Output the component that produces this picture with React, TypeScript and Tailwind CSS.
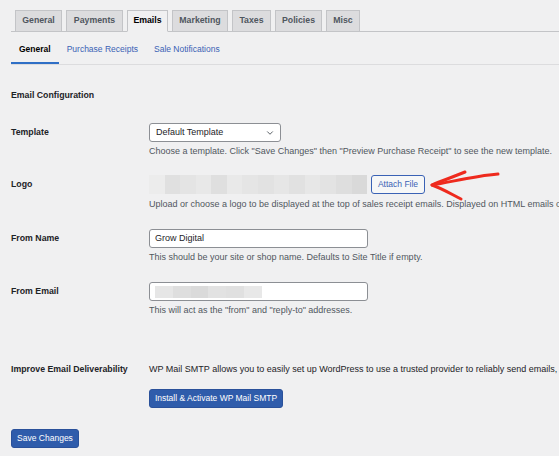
import { ChevronDown } from 'lucide-react'

const tabs = [
  { label: 'General', w: 'w-[47px]' },
  { label: 'Payments', w: 'w-[57px]' },
  { label: 'Emails', w: 'w-[41px]', active: true },
  { label: 'Marketing', w: 'w-[56px]' },
  { label: 'Taxes', w: 'w-[39px]' },
  { label: 'Policies', w: 'w-[47px]' },
  { label: 'Misc', w: 'w-[34px]' },
]

// pixelated blur blocks that hide the logo url / email
const logoBlocks = ['#ececec', '#e0e0e0', '#e4e4e4', '#e8e8e8', '#dfdfdf', '#e9e9e9', '#e5e5e5', '#e2e2e2', '#e6e6e6', '#e1e1e1', '#e7e7e7', '#e3e3e3', '#dedede', '#d9d9d9']
const emailBlocks = ['#e6e6e6', '#dedede', '#dadada', '#e2e2e2', '#e0e0e0', '#e8e8e8']

function Row({ label, children, className = '' }: { label: string; children: React.ReactNode; className?: string }) {
  return (
    <div className={`flex ${className}`}>
      <div className="w-[138px] shrink-0 h-[19px] flex items-center text-[8.75px] font-bold text-[#1d2327]">
        {label}
      </div>
      <div className="flex flex-col">{children}</div>
    </div>
  )
}

function Desc({ children, className = 'mt-[3px]' }: { children: React.ReactNode; className?: string }) {
  return <p className={`text-[9px] leading-[12px] text-[#50575e] whitespace-nowrap ${className}`}>{children}</p>
}

export default function App() {
  return (
    <div className="w-[559px] h-[456px] overflow-hidden bg-[#f0f0f1] pl-[11px] pt-[10px] font-['Liberation_Sans',Arial,sans-serif] text-[#1d2327]">
      {/* Main tabs */}
      <div className="flex gap-[4px] pl-[4px] border-b border-[#c3c4c7]">
        {tabs.map((t) => (
          <div
            key={t.label}
            className={`${t.w} h-[22px] -mb-px flex items-center justify-center border border-[#c3c4c7] text-[8.75px] font-bold ${
              t.active ? 'bg-[#f0f0f1] border-b-[#f0f0f1] text-black' : 'bg-[#dcdcde] text-[#50575e]'
            }`}
          >
            {t.label}
          </div>
        ))}
      </div>

      {/* Sub tabs */}
      <div className="flex border-b border-[#dcdcde]">
        <div className="h-[32px] px-[8px] pt-[4px] flex items-center border-b-2 border-[#2f6fc6] text-[8.5px] font-bold text-black">
          General
        </div>
        <div className="h-[32px] px-[8px] pt-[4px] flex items-center border-b-2 border-transparent text-[8.5px] text-[#3a62b5]">
          Purchase Receipts
        </div>
        <div className="h-[32px] px-[8px] pt-[4px] flex items-center border-b-2 border-transparent text-[8.5px] text-[#3a62b5]">
          Sale Notifications
        </div>
      </div>

      <h2 className="mt-[24px] text-[8.75px] leading-[12px] font-bold">Email Configuration</h2>

      <Row label="Template" className="mt-[22px]">
        <div className="w-[132px] h-[19px] bg-white border border-[#8c8f94] rounded-[3px] flex items-center justify-between pl-[6px] pr-[5px] text-[9px]">
          <span>Default Template</span>
          <ChevronDown size={10} strokeWidth={2} className="text-[#3c434a]" />
        </div>
        <Desc>Choose a template. Click "Save Changes" then "Preview Purchase Receipt" to see the new template.</Desc>
      </Row>

      <Row label="Logo" className="mt-[18px]">
        <div className="flex items-center">
          <div className="w-[218px] h-[19px] flex">
            {logoBlocks.map((c, i) => (
              <div key={i} className="h-full flex-1" style={{ backgroundColor: c }} />
            ))}
          </div>
          <div className="ml-[4px] w-[54px] h-[19px] rounded-[3px] border border-[#3a62b5] bg-[#f6f7f7] flex items-center justify-center text-[8.5px] text-[#3a62b5]">
            Attach File
          </div>
          <svg width="72" height="34" viewBox="0 0 72 34" className="ml-[4px] -my-[8px]" fill="none">
            <path d="M3 17 C 22 14, 45 8, 69 6" stroke="#ee2a1e" strokeWidth="3" strokeLinecap="round" />
            <path d="M36 4 C 24 9, 12 13, 3 17 C 12 20, 22 26, 32 31" stroke="#ee2a1e" strokeWidth="3" strokeLinecap="round" strokeLinejoin="round" />
          </svg>
        </div>
        <Desc className="mt-[4px]">Upload or choose a logo to be displayed at the top of sales receipt emails. Displayed on HTML emails only.</Desc>
      </Row>

      <Row label="From Name" className="mt-[19px]">
        <div className="w-[219px] h-[19px] bg-white border border-[#8c8f94] rounded-[3px] flex items-center pl-[5px] text-[9px]">
          Grow Digital
        </div>
        <Desc>This should be your site or shop name. Defaults to Site Title if empty.</Desc>
      </Row>

      <Row label="From Email" className="mt-[19px]">
        <div className="w-[219px] h-[19px] bg-white border border-[#8c8f94] rounded-[3px] flex items-center pl-[5px]">
          <div className="flex w-[107px] h-[12px]">
            {emailBlocks.map((c, i) => (
              <div key={i} className="h-full flex-1" style={{ backgroundColor: c }} />
            ))}
          </div>
        </div>
        <Desc>This will act as the "from" and "reply-to" addresses.</Desc>
      </Row>

      <div className="flex mt-[47px]">
        <div className="w-[138px] shrink-0 text-[8.75px] leading-[12px] font-bold">Improve Email Deliverability</div>
        <div className="flex flex-col">
          <p className="text-[9px] leading-[12px] whitespace-nowrap text-[#1d2327]">
            WP Mail SMTP allows you to easily set up WordPress to use a trusted provider to reliably send emails, including store notifications.
          </p>
          <button className="mt-[14px] w-[134px] h-[19px] rounded-[3px] bg-[#2f5cab] border border-[#2a519a] text-white text-[8.5px] flex items-center justify-center">
            Install &amp; Activate WP Mail SMTP
          </button>
        </div>
      </div>

      <button className="mt-[21px] w-[68px] h-[19px] rounded-[3px] bg-[#2f5cab] border border-[#2a519a] text-white text-[8.5px] flex items-center justify-center">
        Save Changes
      </button>
    </div>
  )
}
